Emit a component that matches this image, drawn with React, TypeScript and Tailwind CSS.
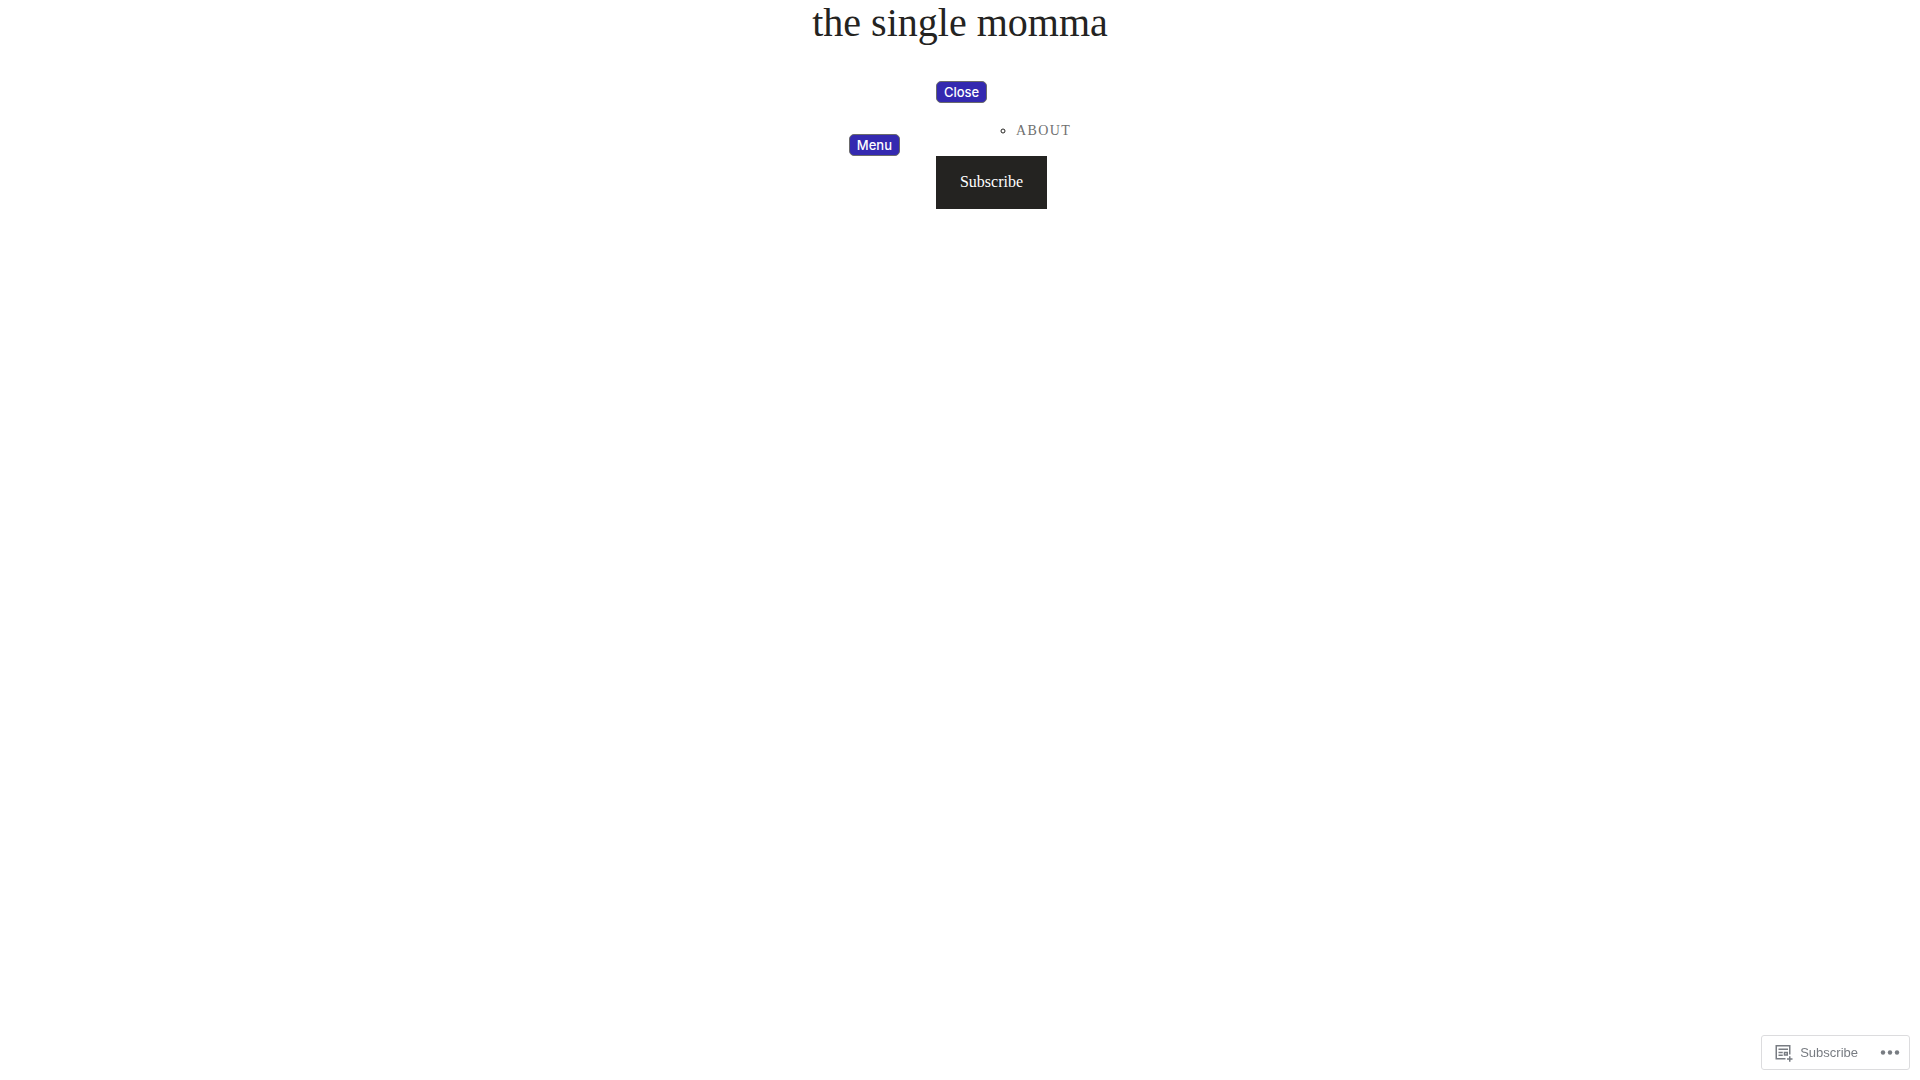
interface ActionButtonProps {
  label: string;
}

function ActionButton({ label }: ActionButtonProps) {
  return (
    <button
      type="button"
      className="block h-[22px] rounded-[5px] border border-[#6b6b6b] bg-[#3429b0] px-[7px] font-['Inter',sans-serif] text-[13px] leading-5 font-medium text-white"
    >
      {label}
    </button>
  );
}

function SubscribeIcon() {
  return (
    <svg width="24" height="24" viewBox="0 0 24 24" fill="none" aria-hidden="true">
      <path d="M13.5 17.75H4.25V4.75H17.75V13.5" stroke="#787c82" strokeWidth="1.5" />
      <path d="M6.5 8.25h9.5M6.5 11.5h4.25M6.5 14.25h4.25" stroke="#787c82" strokeWidth="1.4" />
      <path d="M12.5 11.5h2.75v2.5h-2.75z" stroke="#787c82" strokeWidth="1.5" />
      <path d="M17.75 15.25v5.5M15 18h5.5" stroke="#787c82" strokeWidth="1.5" />
    </svg>
  );
}

function Header() {
  return (
    <header className="flex flex-col items-center gap-[35px]">
      <h1 className="text-[40px] leading-[46px]">
        <a href="#">the single momma</a>
      </h1>

      <nav className="flex items-center gap-9">
        <ActionButton label="Menu" />
        <div className="flex flex-col items-start">
          <ActionButton label="Close" />
          <ul className="mt-4 mb-[14px] list-[circle] pl-20 text-sm leading-[23px] tracking-widest text-[#242321]">
            <li>
              <a href="#" className="text-[#6f6f6f] uppercase">
                About
              </a>
            </li>
          </ul>
          <a href="#" className="bg-[#242321] px-6 pt-[15px] pb-[17px] text-base leading-[21px] text-white">
            Subscribe
          </a>
        </div>
      </nav>
    </header>
  );
}

// Floating bar pinned to the corner of the window
function ActionBar() {
  return (
    <div className="fixed right-[10px] bottom-[10px] flex h-[35px] items-center rounded-[3px] border border-[#dcdcde] bg-white font-['Liberation_Sans',sans-serif] text-[13px] text-[#787c82]">
      <a href="#" className="flex items-center gap-1 pl-[10px]">
        <SubscribeIcon />
        Subscribe
      </a>
      <button type="button" aria-label="More options" className="pr-[7px] pl-5">
        <svg width="24" height="24" viewBox="0 0 24 24" fill="#787c82" aria-hidden="true">
          <circle cx="5" cy="11.5" r="2.2" />
          <circle cx="12" cy="11.5" r="2.2" />
          <circle cx="19" cy="11.5" r="2.2" />
        </svg>
      </button>
    </div>
  );
}

export default function App() {
  return (
    <div className="min-h-screen bg-white font-['Liberation_Serif',serif] text-[#242321]">
      <Header />
      <ActionBar />
    </div>
  );
}
